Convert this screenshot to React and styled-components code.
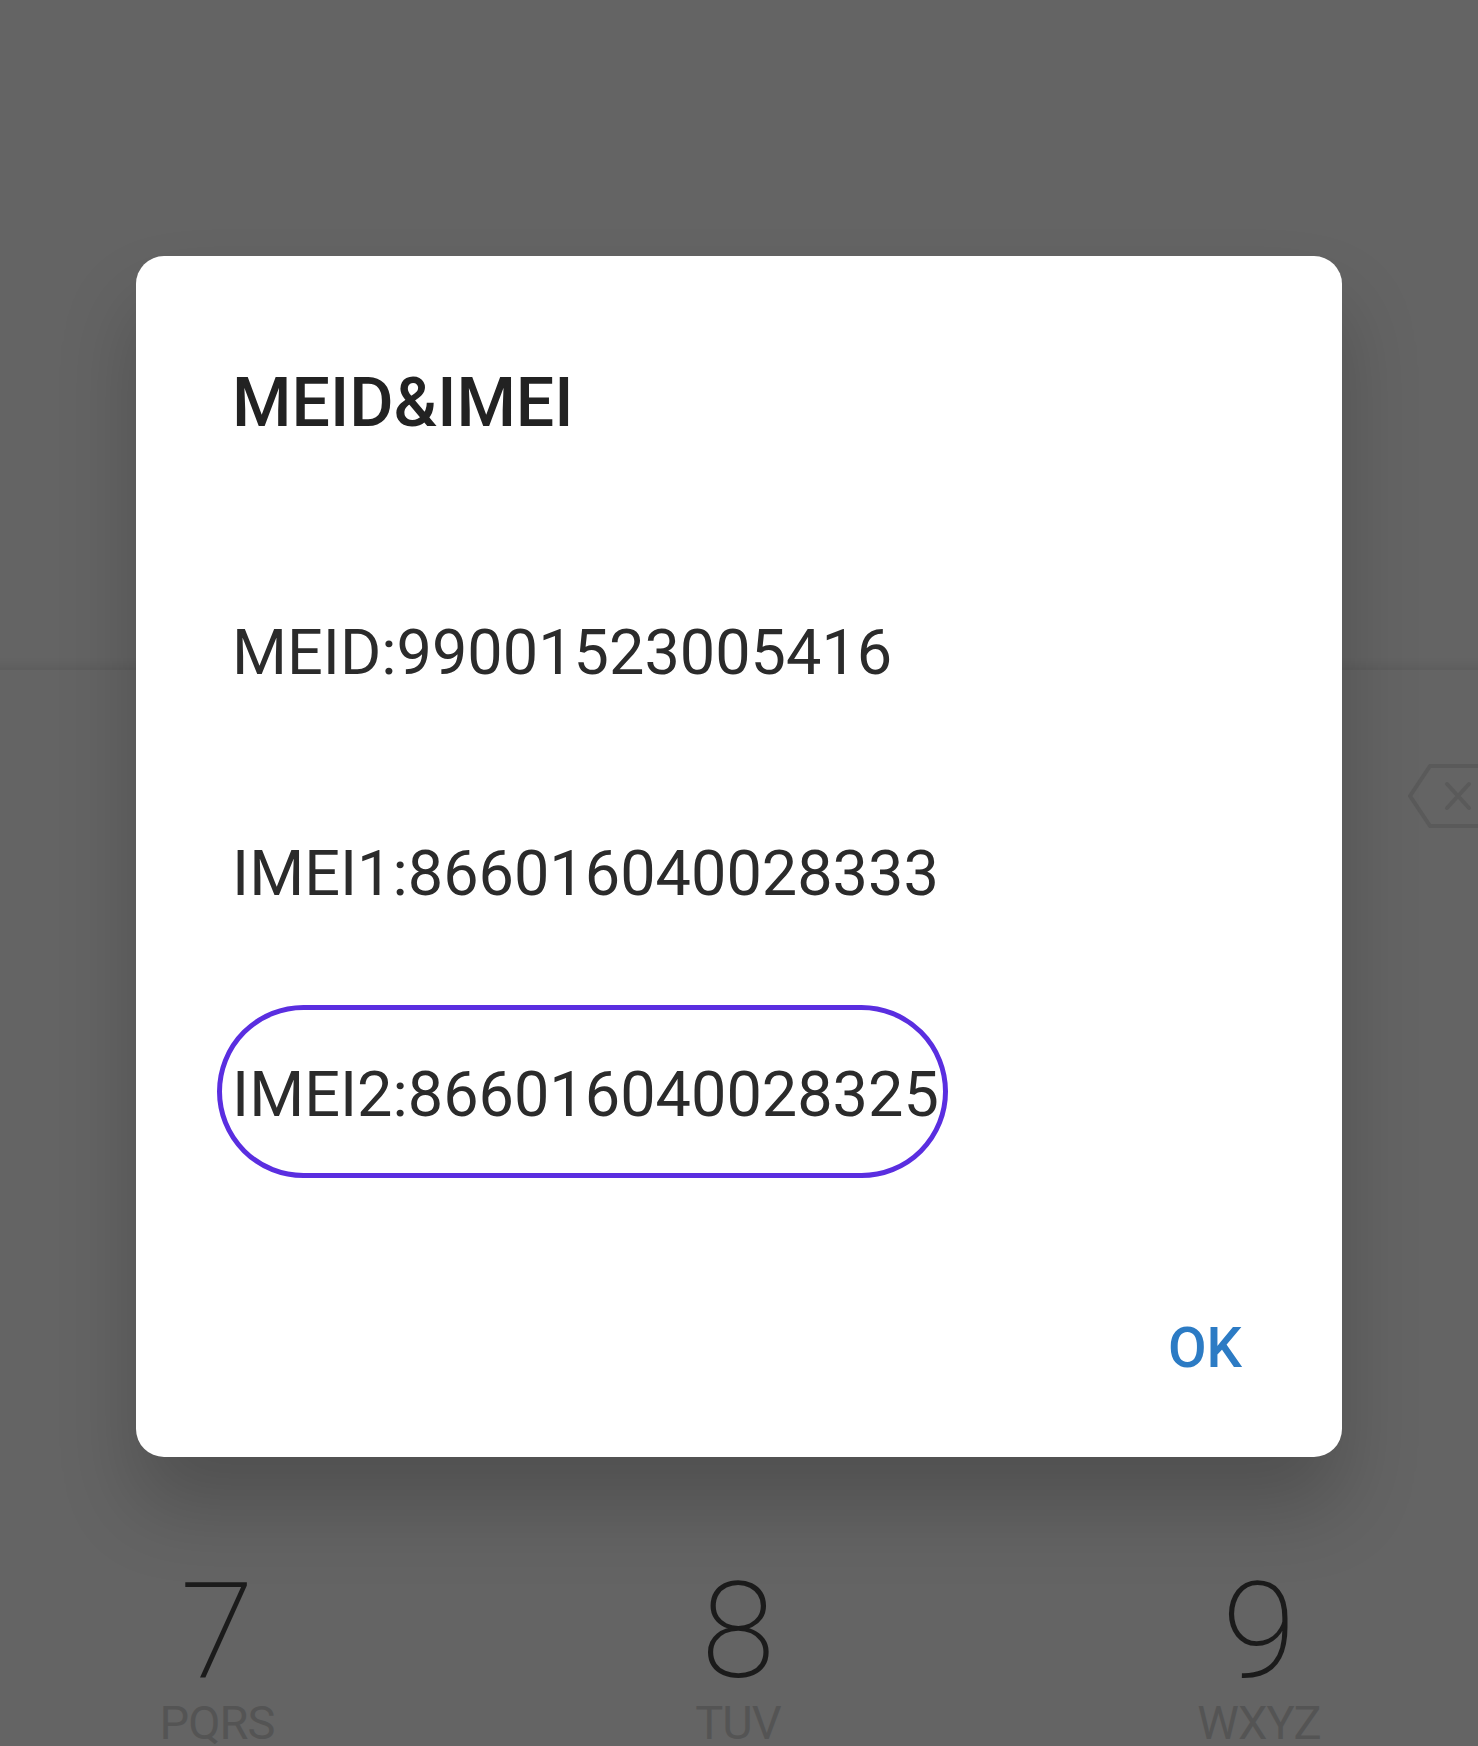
import React from 'react';
import styled, { createGlobalStyle } from 'styled-components';

const GlobalStyle = createGlobalStyle`
    html, body {
        margin: 0;
        padding: 0;
        background: #646464;
    }
    body {
        font-family: Roboto, "Liberation Sans", sans-serif;
    }
`;

const Screen = styled.div`
    position: relative;
    width: 1478px;
    height: 1746px;
    overflow: hidden;
    background: #646464;
    display: flex;
    flex-direction: column;
`;

const NumberDisplay = styled.div`
    height: 668px;
    flex-shrink: 0;
    border-bottom: 2px solid #5e5e5e;
    box-shadow: inset 0 -12px 10px -10px rgba(0, 0, 0, 0.08);
`;

const ActionRow = styled.div`
    display: flex;
    justify-content: flex-end;
    padding-top: 92px;
`;

const BackspaceIcon = styled.svg`
    width: 100px;
    height: 68px;
    margin-right: -28px;
`;

const Keypad = styled.div`
    margin-top: auto;
    display: flex;
    justify-content: space-between;
    padding: 0 139px 0 137px;
`;

const Key = styled.div`
    width: 160px;
    display: flex;
    flex-direction: column;
    align-items: center;
`;

const Digit = styled.span`
    font-size: 134px;
    font-weight: 200;
    line-height: 134px;
    color: #1b1b1b;
`;

const Letters = styled.span`
    font-size: 47px;
    line-height: 47px;
    color: #545454;
    letter-spacing: -1px;
`;

const Dialog = styled.div`
    position: absolute;
    top: 256px;
    left: 136px;
    width: 1206px;
    height: 1201px;
    box-sizing: border-box;
    padding: 107px 100px 0 96px;
    background: #ffffff;
    border-radius: 28px;
    box-shadow: 0 50px 80px rgba(0, 0, 0, 0.2);
    display: flex;
    flex-direction: column;
`;

const Title = styled.h2`
    margin: 0;
    font-size: 68px;
    font-weight: 500;
    line-height: 80px;
    color: #222222;
`;

const EntryList = styled.div`
    margin-top: 170px;
    display: flex;
    flex-direction: column;
    align-items: flex-start;
    gap: 141px;
`;

const Entry = styled.div`
    font-size: 63px;
    line-height: 80px;
    color: #2b2b2b;
    white-space: nowrap;
    ${p => p.$marked && `
        border: 5px solid #5a2ee0;
        border-radius: 999px;
        padding: 45px 4px 38px 10px;
        margin: -50px 0 -43px -15px;
    `}
`;

const Footer = styled.div`
    margin-top: 181px;
    display: flex;
    justify-content: flex-end;
`;

const OkButton = styled.button`
    background: none;
    border: none;
    padding: 0;
    font-family: inherit;
    font-size: 56px;
    font-weight: 500;
    line-height: 64px;
    color: #2c7bc4;
`;

const keys = [
    { digit: '7', letters: 'PQRS' },
    { digit: '8', letters: 'TUV' },
    { digit: '9', letters: 'WXYZ' }
];

const entries = [
    { text: 'MEID:99001523005416' },
    { text: 'IMEI1:866016040028333' },
    { text: 'IMEI2:866016040028325', marked: true }
];

function App() {
    return (
        <>
            <GlobalStyle />
            <Screen>
                <NumberDisplay />
                <ActionRow>
                    <BackspaceIcon viewBox="0 0 100 68" fill="none" stroke="#5a5a5a" strokeWidth="4" strokeLinejoin="round">
                        <path d="M4 34 L24 4 L110 4 L110 64 L24 64 Z" />
                        <path d="M41 22 L63 46 M63 22 L41 46" strokeLinecap="round" />
                    </BackspaceIcon>
                </ActionRow>
                <Keypad>
                    {keys.map(k => (
                        <Key key={k.digit}>
                            <Digit>{k.digit}</Digit>
                            <Letters>{k.letters}</Letters>
                        </Key>
                    ))}
                </Keypad>

                <Dialog>
                    <Title>MEID&amp;IMEI</Title>
                    <EntryList>
                        {entries.map(e => (
                            <Entry key={e.text} $marked={e.marked}>{e.text}</Entry>
                        ))}
                    </EntryList>
                    <Footer>
                        <OkButton>OK</OkButton>
                    </Footer>
                </Dialog>
            </Screen>
        </>
    );
}

export default App;
